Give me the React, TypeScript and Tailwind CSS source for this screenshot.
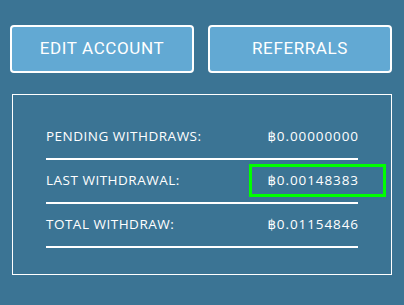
import React from "react";

const rows = [
  { label: "PENDING WITHDRAWS:", value: "฿0.00000000" },
  { label: "LAST WITHDRAWAL:", value: "฿0.00148383", highlight: true },
  { label: "TOTAL WITHDRAW:", value: "฿0.01154846" },
];

export default function App() {
  return (
    <div className="w-[404px] h-[305px] bg-[#3b7494] overflow-hidden">
      <div className="flex gap-[14px] pt-[25px] pl-[10px] pr-[12px]">
        <button className="flex-1 h-[48px] bg-[#62a9d3] border-2 border-white rounded-[4px] text-white text-[17px] tracking-[0.6px] font-['Roboto',sans-serif]">
          EDIT ACCOUNT
        </button>
        <button className="flex-1 h-[48px] bg-[#62a9d3] border-2 border-white rounded-[4px] text-white text-[17px] tracking-[0.6px] font-['Roboto',sans-serif]">
          REFERRALS
        </button>
      </div>
      <div className="mt-[21px] ml-[12px] w-[380px] h-[181px] border border-white pt-[21px] px-[33px] font-['Open_Sans','DejaVu_Sans',sans-serif] text-white">
        {rows.map((r) => (
          <div key={r.label} className="relative h-[44px] flex flex-col">
            <div className="flex-1 flex items-center justify-between text-[13.5px] leading-none">
              <span className="tracking-[0.5px]">{r.label}</span>
              <span className="tracking-[0.9px] mr-[-0.9px]">{r.value}</span>
            </div>
            <div className="h-[2px] bg-white" />
            {r.highlight && (
              <div className="absolute left-[203px] top-[4px] w-[137px] h-[33px] border-[3px] border-[#00ff00]" />
            )}
          </div>
        ))}
      </div>
    </div>
  );
}
